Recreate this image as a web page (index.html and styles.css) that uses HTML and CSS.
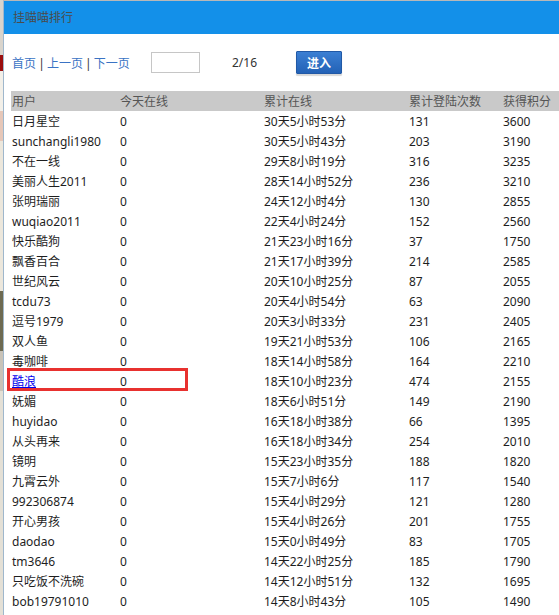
FILE: index.html
```html
<!DOCTYPE html>
<html>
  <head>
    <meta http-equiv="Content-type" content="text/html; charset=utf-8" />
    <title>挂喵喵排行</title>
    <link rel="stylesheet" href="styles.css">
  </head>
  <body>
    <div class="backdrop">
      <div class="seg s1"></div>
      <div class="seg s2"></div>
      <div class="seg s3"></div>
      <div class="seg s4"></div>
      <div class="seg s5"></div>
      <div class="seg s6"></div>
      <div class="seg s7"></div>
      <div class="seg s8"></div>
    </div>
    <div class="dialog">
      <div class="title">挂喵喵排行</div>
      <div class="toolbar">
        <div class="pager">
          <a href="#">首页</a> | <a href="#">上一页</a> | <a href="#">下一页</a>
        </div>
        <input type="text" class="page-input" />
        <span class="page-num">2/16</span>
        <button class="go">进入</button>
      </div>
      <div class="table-wrap">
        <table class="rank">
          <colgroup>
            <col class="c-user" />
            <col class="c-today" />
            <col class="c-total" />
            <col class="c-login" />
            <col class="c-score" />
          </colgroup>
          <thead>
            <tr><th>用户</th><th>今天在线</th><th>累计在线</th><th>累计登陆次数</th><th>获得积分</th></tr>
          </thead>
          <tbody>
            <tr><td>日月星空</td><td>0</td><td>30天5小时53分</td><td>131</td><td>3600</td></tr>
            <tr><td>sunchangli1980</td><td>0</td><td>30天5小时43分</td><td>203</td><td>3190</td></tr>
            <tr><td>不在一线</td><td>0</td><td>29天8小时19分</td><td>316</td><td>3235</td></tr>
            <tr><td>美丽人生2011</td><td>0</td><td>28天14小时52分</td><td>236</td><td>3210</td></tr>
            <tr><td>张明瑞丽</td><td>0</td><td>24天12小时4分</td><td>130</td><td>2855</td></tr>
            <tr><td>wuqiao2011</td><td>0</td><td>22天4小时24分</td><td>152</td><td>2560</td></tr>
            <tr><td>快乐酷狗</td><td>0</td><td>21天23小时16分</td><td>37</td><td>1750</td></tr>
            <tr><td>飘香百合</td><td>0</td><td>21天17小时39分</td><td>214</td><td>2585</td></tr>
            <tr><td>世纪风云</td><td>0</td><td>20天10小时25分</td><td>87</td><td>2055</td></tr>
            <tr><td>tcdu73</td><td>0</td><td>20天4小时54分</td><td>63</td><td>2090</td></tr>
            <tr><td>逗号1979</td><td>0</td><td>20天3小时33分</td><td>231</td><td>2405</td></tr>
            <tr><td>双人鱼</td><td>0</td><td>19天21小时53分</td><td>106</td><td>2165</td></tr>
            <tr><td>毒咖啡</td><td>0</td><td>18天14小时58分</td><td>164</td><td>2210</td></tr>
            <tr><td><a href="#" class="me">酷浪</a></td><td>0</td><td>18天10小时23分</td><td>474</td><td>2155</td></tr>
            <tr><td>妩媚</td><td>0</td><td>18天6小时51分</td><td>149</td><td>2190</td></tr>
            <tr><td>huyidao</td><td>0</td><td>16天18小时38分</td><td>66</td><td>1395</td></tr>
            <tr><td>从头再来</td><td>0</td><td>16天18小时34分</td><td>254</td><td>2010</td></tr>
            <tr><td>镜明</td><td>0</td><td>15天23小时35分</td><td>188</td><td>1820</td></tr>
            <tr><td>九霄云外</td><td>0</td><td>15天7小时6分</td><td>117</td><td>1540</td></tr>
            <tr><td>992306874</td><td>0</td><td>15天4小时29分</td><td>121</td><td>1280</td></tr>
            <tr><td>开心男孩</td><td>0</td><td>15天4小时26分</td><td>201</td><td>1755</td></tr>
            <tr><td>daodao</td><td>0</td><td>15天0小时49分</td><td>83</td><td>1705</td></tr>
            <tr><td>tm3646</td><td>0</td><td>14天22小时25分</td><td>185</td><td>1790</td></tr>
            <tr><td>只吃饭不洗碗</td><td>0</td><td>14天12小时51分</td><td>132</td><td>1695</td></tr>
            <tr><td>bob19791010</td><td>0</td><td>14天8小时43分</td><td>105</td><td>1490</td></tr>
          </tbody>
        </table>
        <div class="mark"></div>
      </div>
    </div>
  </body>
</html>
```

FILE: styles.css
```css
html, body {
  margin: 0;
  overflow: hidden;
}
body {
  display: flex;
  width: 600px;
  height: 615px;
  background-color: #e9e9e9;
  font-family: "Noto Sans", "Noto Sans CJK SC", sans-serif;
  font-size: 12px;
  color: #222;
}
.backdrop {
  width: 3px;
  display: flex;
  flex-direction: column;
}
.seg {
  flex: none;
}
.s1 { height: 55px; background-color: #d9d4cc; }
.s2 { height: 16px; background-color: #9a0e0e; }
.s3 { height: 40px; background-color: #f2efe8; }
.s4 { height: 30px; background-color: #e6c7b8; }
.s5 { height: 150px; background-color: #ece7dc; }
.s6 { height: 60px; background-color: #6d6a52; }
.s7 { height: 40px; background-color: #c9c3b8; }
.s8 { height: 224px; background-color: #e4e0d6; }

.dialog {
  flex: none;
  width: 590px;
  background-color: #fff;
  border-top: 1px solid #b8b8b8;
  border-left: 1px solid #9fb7cc;
}
.title {
  height: 33px;
  line-height: 33px;
  padding-left: 9px;
  background-color: #1390e9;
  color: #4b4b4b;
  font-size: 12px;
}
.toolbar {
  height: 57px;
  display: flex;
  align-items: center;
  padding-left: 8px;
  box-sizing: border-box;
}
.pager {
  color: #333;
  width: 139px;
  word-spacing: -1px;
}
.pager a {
  color: #3a73c4;
  text-decoration: none;
}
.page-input {
  width: 49px;
  height: 21px;
  box-sizing: border-box;
  border: 1px solid #c6c6c6;
  margin: 0;
  padding: 0;
}
.page-num {
  margin-left: 32px;
  width: 64px;
  color: #333;
}
.go {
  width: 46px;
  height: 23px;
  border: 1px solid #2159a6;
  border-radius: 1px;
  background: linear-gradient(#3b7fd3, #2362b6);
  color: #fff;
  font-weight: bold;
  font-family: "Noto Sans CJK SC", sans-serif;
  font-size: 12px;
  padding: 0;
  box-shadow: 0 2px 1px #d8d8d8;
}
.table-wrap {
  position: relative;
  margin-left: 7px;
}
.rank {
  border-collapse: collapse;
  table-layout: fixed;
  width: 580px;
}
.c-user { width: 108px; }
.c-today { width: 144px; }
.c-total { width: 145px; }
.c-login { width: 94px; }
.c-score { width: 89px; }
.rank th, .rank td {
  height: 20px;
  padding: 0 0 0 1px;
  text-align: left;
  white-space: nowrap;
  font-weight: normal;
}
.rank th {
  background-color: #c9c9c9;
  color: #555;
}
.rank td {
  color: #1e1e1e;
}
.me {
  color: #0000ee;
}
.mark {
  position: absolute;
  left: -4px;
  top: 277px;
  width: 181px;
  height: 23px;
  border: 3px solid #e8312f;
  box-sizing: border-box;
}
```
